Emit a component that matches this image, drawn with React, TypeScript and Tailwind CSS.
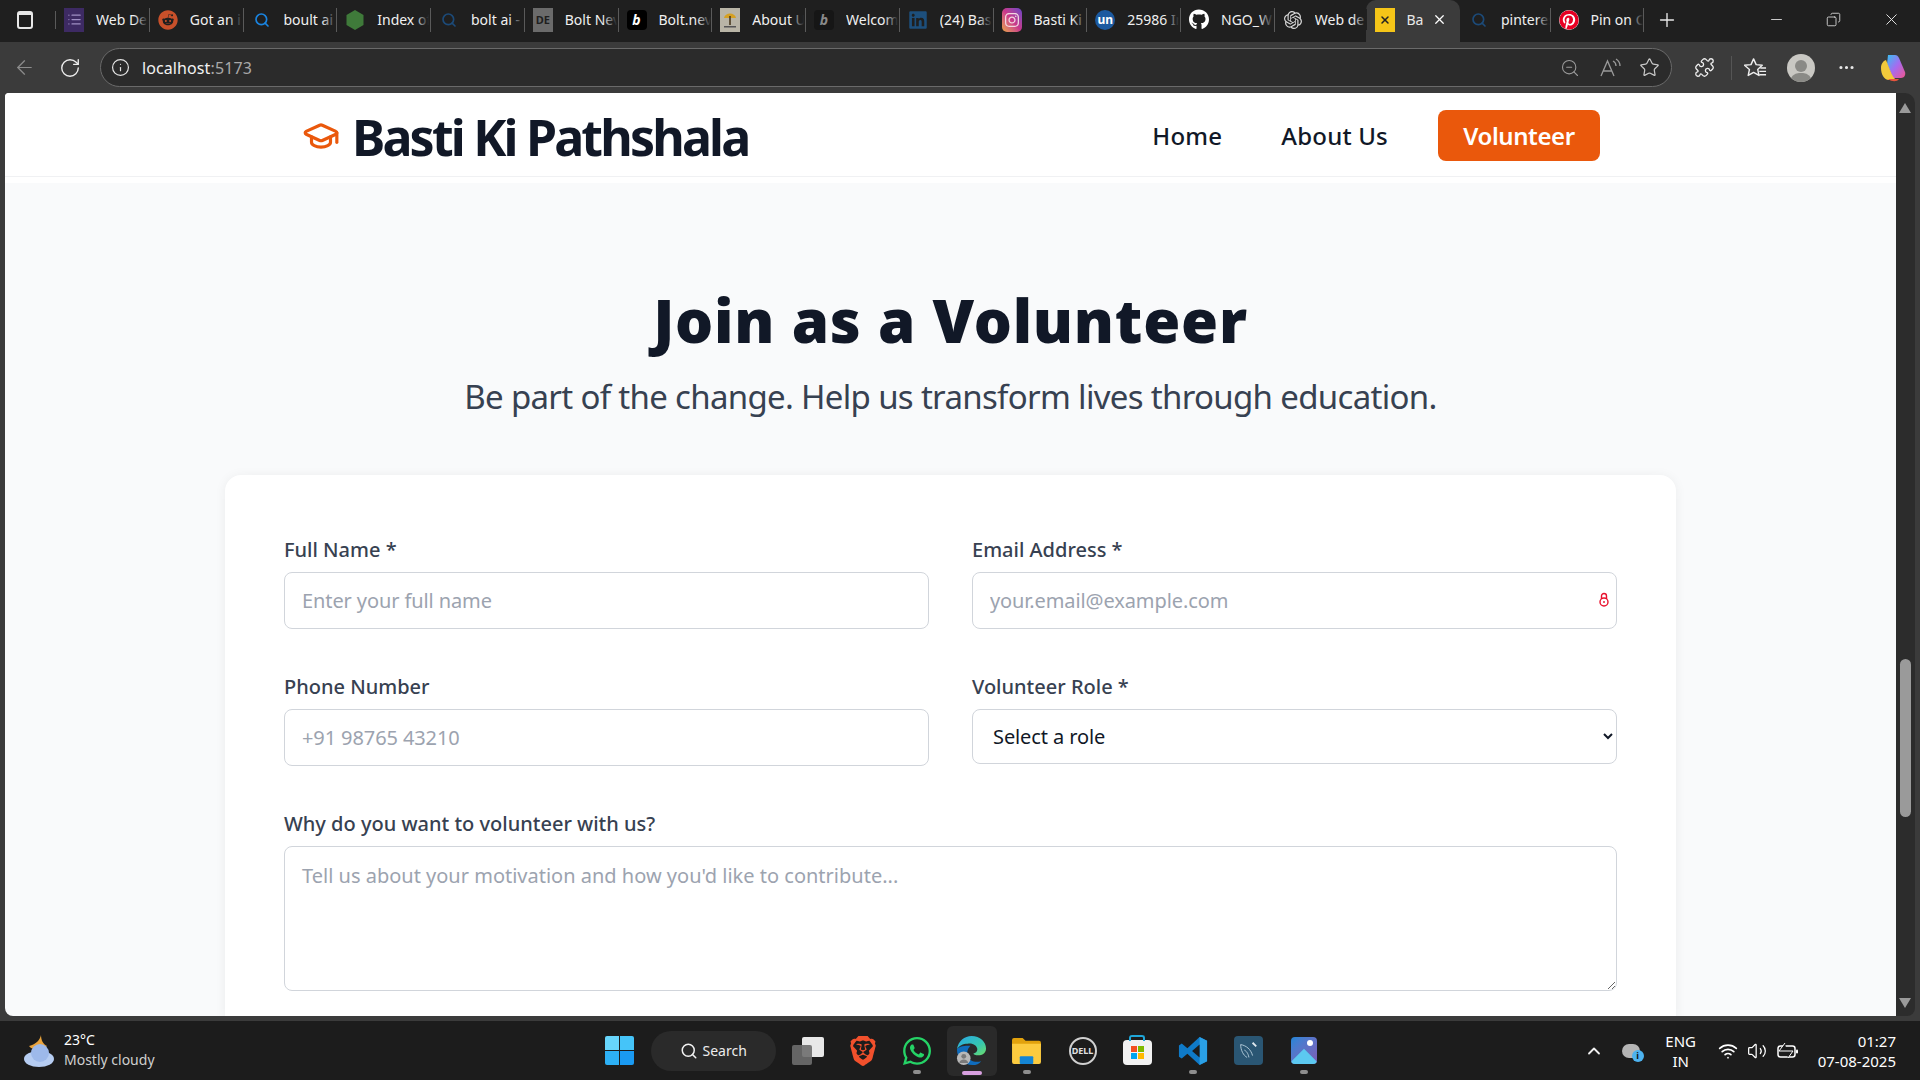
import React from "react";
import {
  ArrowLeft,
  RotateCw,
  Info,
  ZoomOut,
  Star,
  Puzzle,
  MoreHorizontal,
  Plus,
  Minus,
  X,
  Search,
  ChevronUp,
  Wifi,
  Volume2,
  GraduationCap,
  List,
  Copy,
} from "lucide-react";
import { FaWhatsapp, FaGithub, FaPinterest, FaLinkedin, FaReddit, FaInstagram } from "react-icons/fa";
import { SiBrave, SiOpenai } from "react-icons/si";

const font = "font-['Noto_Sans','Open_Sans',sans-serif]";

interface TabItem {
  id: string;
  title: string;
  icon: React.ReactNode;
}

const SearchFav = ({ dim }: { dim?: boolean }) => (
  <Search size={16} strokeWidth={2.5} className={dim ? "text-[#1c4a78]" : "text-[#1a84e0]"} />
);

const BoltFav = ({ dark }: { dark?: boolean }) => (
  <span
    className={`flex h-5 w-5 items-center justify-center rounded-[4px] text-[14px] font-bold italic ${
      dark ? "bg-[#161616] text-[#8a8a8a]" : "bg-black text-white"
    }`}
  >
    b
  </span>
);

const tabsLeft: TabItem[] = [
  {
    id: "trello",
    title: "Web De",
    icon: (
      <span className="flex h-6 w-5 items-center justify-center bg-[#3d2a63]">
        <List size={15} className="text-[#9f8fc4]" />
      </span>
    ),
  },
  { id: "reddit", title: "Got an i", icon: <FaReddit size={20} className="text-[#c8502a]" /> },
  { id: "s1", title: "boult ai", icon: <SearchFav /> },
  {
    id: "node",
    title: "Index of",
    icon: (
      <svg viewBox="0 0 20 22" className="h-6 w-5">
        <path d="M10 1l8.500 5v10L10 21l-8.500-5V6z" fill="#3f7a3a" />
      </svg>
    ),
  },
  { id: "s2", title: "bolt ai -", icon: <SearchFav dim /> },
  {
    id: "de",
    title: "Bolt Nev",
    icon: (
      <span className="flex h-6 w-5 items-center justify-center bg-[#6b6b6b] text-[11px] font-bold leading-none text-[#1f1f1f]">
        DE
      </span>
    ),
  },
  { id: "bolt", title: "Bolt.nev", icon: <BoltFav /> },
  {
    id: "about",
    title: "About U",
    icon: (
      <span className="flex h-6 w-5 items-center justify-center bg-[#b9b5a6]">
        <svg viewBox="0 0 20 24" className="h-6 w-5">
          <path d="M4 10c1-6 11-6 12 0z" fill="#d5a021" />
          <rect x="9.200" y="8" width="1.600" height="9" fill="#4a3a20" />
          <rect x="4" y="18" width="12" height="1.500" fill="#555" />
        </svg>
      </span>
    ),
  },
  { id: "bolt2", title: "Welcom", icon: <BoltFav dark /> },
  { id: "in", title: "(24) Bas", icon: <FaLinkedin size={20} className="text-[#1d4f7c]" /> },
  {
    id: "ig",
    title: "Basti Ki",
    icon: (
      <span className="flex h-6 w-5 items-center justify-center rounded-[5px] bg-gradient-to-tr from-[#e8a23a] via-[#c9368a] to-[#6a3fc8]">
        <FaInstagram size={16} className="text-[#f3d6e0]" />
      </span>
    ),
  },
  {
    id: "un",
    title: "25986 In",
    icon: (
      <span className="flex h-5 w-5 items-center justify-center rounded-full bg-[#1c5aa0] text-[12px] font-bold text-white">
        un
      </span>
    ),
  },
  { id: "gh", title: "NGO_W", icon: <FaGithub size={21} className="text-white" /> },
  { id: "gpt", title: "Web de", icon: <SiOpenai size={18} className="text-[#d8d8d8]" /> },
];

const TabCell = ({ tab }: { tab: TabItem }) => (
  <div className="flex h-[24px] w-[93.75px] shrink-0 items-center border-r border-[#5a5a5a] pl-[8px]">
    <span className="flex w-[20px] shrink-0 items-center justify-center">{tab.icon}</span>
    <span className="relative ml-[12px] w-[52px] overflow-hidden whitespace-nowrap text-[14px] text-[#f0f0f0]">
      {tab.title}
      <span className="absolute inset-y-0 right-0 w-[14px] bg-gradient-to-r from-transparent to-[#1f1f1f]" />
    </span>
  </div>
);

const TabBar = () => (
  <div className="flex h-[42px] shrink-0 items-center bg-[#1f1f1f] pb-[3px]">
    <div className="flex w-[56px] shrink-0 items-center border-r border-[#5a5a5a]">
      <span className="ml-[17px] mr-[22px] h-[18px] w-[17px] rounded-[3px] border-2 border-[#e8e8e8] border-t-[4px]" />
    </div>
    {tabsLeft.map((tab) => (
      <TabCell key={tab.id} tab={tab} />
    ))}
    <div className="-ml-[3px] -mb-[3px] flex h-[42px] w-[94px] shrink-0 items-center self-end rounded-t-[10px] bg-[#3b3b3b] pb-[3px] pl-[9px]">
      <span className="flex h-6 w-5 items-center justify-center bg-[#f5c518]">
        <X size={12} strokeWidth={3} className="text-[#222]" />
      </span>
      <span className="ml-[12px] w-[16px] overflow-hidden text-[14px] text-[#e8e8e8]">Ba</span>
      <X size={15} className="ml-[9px] text-white" />
    </div>
    <div className="flex h-[24px] w-[91px] shrink-0 items-center border-r border-[#5a5a5a] pl-[10px]">
      <span className="flex w-[20px] justify-center">
        <SearchFav dim />
      </span>
      <span className="relative ml-[12px] w-[50px] overflow-hidden whitespace-nowrap text-[14px] text-[#f0f0f0]">
        pinterest
        <span className="absolute inset-y-0 right-0 w-[14px] bg-gradient-to-r from-transparent to-[#1f1f1f]" />
      </span>
    </div>
    <TabCell tab={{ id: "pin", title: "Pin on C", icon: <FaPinterest size={20} className="rounded-full bg-white text-[#e60023]" /> }} />
    <Plus size={22} strokeWidth={1.5} className="ml-[12px] text-[#e8e8e8]" />
    <div className="ml-auto flex items-center text-[#e8e8e8]">
      <Minus size={17} strokeWidth={1.2} className="mr-[41px]" />
      <Copy size={15} strokeWidth={1.3} className="mr-[41px] -scale-x-100" />
      <X size={19} strokeWidth={1.2} className="mr-[19px]" />
    </div>
  </div>
);

const ToolBar = () => (
  <div className="flex h-[51px] shrink-0 items-center bg-[#3b3b3b]">
    <ArrowLeft size={23} strokeWidth={1.3} className="ml-[13px] text-[#8c8c8c]" />
    <RotateCw size={22} strokeWidth={1.5} className="ml-[23px] text-[#ececec]" />
    <div className="ml-[19px] flex h-[39px] w-[1572px] items-center rounded-full border border-[#6a6a6a] bg-[#2b2b2b]">
      <Info size={19} strokeWidth={1.5} className="ml-[10px] text-[#e4e4e4]" />
      <span className="ml-[12px] text-[16px] tracking-[0.1px] text-[#f2f2f2]">
        localhost<span className="text-[#a8a8a8]">:5173</span>
      </span>
      <div className="ml-auto flex items-center text-[#9a9a9a]">
        <ZoomOut size={20} strokeWidth={1.3} className="mr-[20px]" />
        <svg viewBox="0 0 22 20" className="mr-[17px] h-[20px] w-[22px]" fill="none" stroke="currentColor" strokeWidth="1.3">
          <path d="M1 18L7.500 3 14 18M3.500 13h8" />
          <path d="M13 3c2 1 3 3 3 5M16 1c2.500 1.500 4 4 4 7" />
        </svg>
        <Star size={21} strokeWidth={1.4} className="mr-[11px] text-[#c8c8c8]" />
      </div>
    </div>
    <Puzzle size={21} strokeWidth={1.5} className="ml-[22px] text-[#eee]" />
    <span className="ml-[16px] h-[24px] w-px bg-[#555]" />
    <svg viewBox="0 0 24 22" className="ml-[12px] h-[22px] w-[23px]" fill="none" stroke="#eee" strokeWidth="1.5" strokeLinejoin="round">
      <path d="M10 1.500l2.700 6 6.300.7-4.700 4.300 1.300 6.300-5.600-3.200-5.600 3.200 1.300-6.300L.5 8.200l6.800-.7z" />
      <path d="M17 11h6M16 14.500h7M16 18h7" />
    </svg>
    <span className="ml-[20px] flex h-[28px] w-[28px] flex-col items-center justify-end overflow-hidden rounded-full bg-[#c9c8c3]">
      <span className="mb-[1px] h-[12px] w-[12px] rounded-full bg-[#8a8a86]" />
      <span className="h-[9px] w-[22px] rounded-t-full bg-[#8a8a86]" />
    </span>
    <MoreHorizontal size={19} className="ml-[22px] text-[#e8e8e8]" />
    <svg viewBox="0 0 28 30" className="ml-[23px] h-[30px] w-[28px]">
      <defs>
        <linearGradient id="cp" x1="0" y1="0" x2="1" y2="1">
          <stop offset="0" stopColor="#35c1f1" />
          <stop offset="0.5" stopColor="#a56bf0" />
          <stop offset="1" stopColor="#f0558e" />
        </linearGradient>
      </defs>
      <path d="M9 2h7c2 0 3 1 4 3l6 14c1 3-1 6-4 6h-8L8 11z" fill="url(#cp)" />
      <path d="M7 7c-3 1-5 4-5 8 0 6 3 12 8 12h8c-3-1-5-5-7-10z" fill="#f2c93b" />
      <path d="M9 26h11c-2 3-7 3-11 0z" fill="#e6553d" />
    </svg>
  </div>
);

const labelClass = "block h-[27px] text-[20px] font-medium leading-[27px] text-[#374151]";

const Field = ({ label, placeholder, trailing }: { label: string; placeholder: string; trailing?: React.ReactNode }) => (
  <div>
    <label className={labelClass}>{label}</label>
    <div className="relative mt-[9px]">
      <input
        placeholder={placeholder}
        className="block h-[57px] w-full rounded-[8px] border border-[#d1d5db] bg-white px-[17px] text-[20px] tracking-[-0.1px] outline-none placeholder:text-[#9ca3af]"
      />
      {trailing}
    </div>
  </div>
);

const LockBadge = () => (
  <svg viewBox="0 0 10 16" className="absolute right-[8px] top-[20px] h-[16px] w-[10px]" fill="none" stroke="#e8112d" strokeWidth="1.4">
    <path d="M2.500 7V4a2.500 2.500 0 015 0v3" />
    <circle cx="5" cy="10" r="4" />
    <path d="M5 9v2" />
  </svg>
);

const Page = () => (
  <div className="flex min-h-0 flex-1 overflow-hidden bg-[#3b3b3b] pl-[5px] pr-[5px]">
    <div className={`min-w-0 flex-1 overflow-hidden rounded-bl-[8px] rounded-tl-[4px] bg-[#f9fafb] ${font}`}>
      <nav className="bg-white pb-[6px]">
        <div className="flex h-[84px] items-center border-b border-[#f0f1f3] pl-[297px] pr-[296px] pt-[2px]">
          <GraduationCap size={38} strokeWidth={2} className="text-[#ea580c]" />
          <span className="ml-[12px] mt-[2px] text-[50px] font-bold leading-none tracking-[-2.8px] text-[#111827]">Basti Ki Pathshala</span>
          <div className="ml-auto flex items-center text-[24px] font-medium tracking-[0.2px] text-[#111827]">
            <span>Home</span>
            <span className="ml-[59px]">About Us</span>
            <span className="ml-[50px] flex h-[51px] w-[162px] items-center justify-center rounded-[8px] bg-[#ea580c] font-semibold tracking-[-0.4px] text-white">
              Volunteer
            </span>
          </div>
        </div>
      </nav>

      <main className="flex flex-col items-center pt-[97px]">
        <h1 className="text-[60px] font-black leading-[80px] tracking-[0.77px] text-[#111827]">Join as a Volunteer</h1>
        <p className="mt-[17px] text-[33px] leading-[40px] tracking-[-0.68px] text-[#374151]">
          Be part of the change. Help us transform lives through education.
        </p>

        <form className="mt-[58px] w-[1451px] rounded-[16px] bg-white px-[59px] pb-[40px] pt-[61px] shadow-[0_1px_12px_rgba(0,0,0,0.06)]">
          <div className="grid grid-cols-2 gap-x-[43px] gap-y-[44px]">
            <Field label="Full Name *" placeholder="Enter your full name" />
            <Field label="Email Address *" placeholder="your.email@example.com" trailing={<LockBadge />} />
            <Field label="Phone Number" placeholder="+91 98765 43210" />
            <div>
              <label className={labelClass}>Volunteer Role *</label>
              <select className="mt-[9px] block h-[55px] w-full rounded-[8px] border border-[#d1d5db] bg-white pl-[16px] pr-[2px] text-[20px] tracking-[-0.1px] text-[#111827] outline-none">
                <option>Select a role</option>
              </select>
            </div>
          </div>
          <label className={`mt-[44px] ${labelClass}`}>Why do you want to volunteer with us?</label>
          <textarea
            placeholder="Tell us about your motivation and how you'd like to contribute..."
            className="mt-[9px] block h-[145px] w-full rounded-[8px] border border-[#d1d5db] bg-white px-[17px] py-[14px] text-[20px] outline-none placeholder:text-[#9ca3af]"
          />
        </form>
      </main>
    </div>
    <div className="relative w-[19px] shrink-0 rounded-br-[8px] rounded-tr-[10px] bg-[#2c2c2c]">
      <span className="absolute left-[3px] top-[10px] h-0 w-0 border-x-[6px] border-b-[10px] border-x-transparent border-b-[#9a9a9a]" />
      <span className="absolute left-[4px] top-[566px] h-[158px] w-[11px] rounded-full bg-[#9a9a9a]" />
      <span className="absolute bottom-[8px] left-[3px] h-0 w-0 border-x-[6px] border-t-[10px] border-x-transparent border-t-[#9a9a9a]" />
    </div>
  </div>
);

const TaskCell = ({ width, running, children }: { width: string; running?: boolean; children: React.ReactNode }) => (
  <div className={`relative flex h-[59px] items-center justify-center ${width}`}>
    {children}
    {running && <span className="absolute bottom-[6px] h-[4px] w-[8px] rounded-full bg-[#8e8e8e]" />}
  </div>
);

const Taskbar = () => (
  <div className="flex h-[64px] shrink-0 flex-col bg-[#3b3b3b]">
    <div className="h-[5px]" />
    <div className="relative flex flex-1 items-center bg-[#1c1c1c] font-['Noto_Sans',sans-serif] text-white">
      <svg viewBox="0 0 34 34" className="ml-[22px] h-[34px] w-[34px]">
        <path d="M19 1c-1 5-5 9-12 11 4 5 13 5 18 0-4-2-6-6-6-11z" fill="#e9a33b" />
        <ellipse cx="17" cy="25" rx="15" ry="8" fill="#b6cdf2" />
        <circle cx="18" cy="19" r="9" fill="#9db9ea" />
      </svg>
      <div className="ml-[8px] -mt-[2px] flex flex-col text-[14px] leading-[20px]">
        <span>23°C</span>
        <span className="text-[#cfcfcf]">Mostly cloudy</span>
      </div>

      <div className="ml-[450px] grid h-[29px] w-[29px] grid-cols-2 gap-[1px]">
        <span className="rounded-tl-[2px] bg-[#67d5fb]" />
        <span className="rounded-tr-[2px] bg-[#45c4f9]" />
        <span className="rounded-bl-[2px] bg-[#2db0f5]" />
        <span className="rounded-br-[2px] bg-[#1a9af2]" />
      </div>
      <div className="ml-[17px] flex h-[40px] w-[125px] items-center rounded-full bg-[#2a2a2a] pl-[29px]">
        <Search size={18} strokeWidth={2} className="text-[#f2f2f2]" />
        <span className="ml-[5px] text-[14px] text-[#ececec]">Search</span>
      </div>

      <div className="relative ml-[16px] h-[28px] w-[32px]">
        <span className="absolute right-0 top-0 h-[20px] w-[22px] rounded-[2px] bg-[#e8e8e8]" />
        <span className="absolute bottom-0 left-0 h-[20px] w-[20px] rounded-[2px] bg-[#6e6e6e]/90" />
      </div>

      <TaskCell width="ml-[12px] w-[54px]">
        <SiBrave size={30} className="text-[#f1502c]" />
      </TaskCell>
      <TaskCell width="w-[55px]" running>
        <FaWhatsapp size={32} className="text-[#25d366]" />
      </TaskCell>
      <div className="relative ml-[2px] flex h-[50px] w-[50px] items-center justify-center rounded-[6px] bg-[#2a2a2a]">
        <svg viewBox="0 0 32 32" className="h-[31px] w-[31px]">
          <defs>
            <linearGradient id="edge" x1="0" y1="0" x2="1" y2="1">
              <stop offset="0" stopColor="#2aa8e8" />
              <stop offset="0.6" stopColor="#35c7b0" />
              <stop offset="1" stopColor="#6fdc6a" />
            </linearGradient>
          </defs>
          <path d="M1 15C2 6 9 1 16 1c9 0 15 6 15 13 0 5-4 7-8 7-3 0-5-1-5-2 2 0 4-2 4-4 0-4-5-7-10-6-5 0-9 2-11 6z" fill="url(#edge)" />
          <path d="M1 15c0 9 7 16 16 16 4 0 7-1 9-4-6 2-13 0-14-7-1-4 1-7 3-9-6 0-12 0-14 4z" fill="#0f6cbd" />
          <circle cx="8" cy="24" r="7" fill="#b8b8b8" />
          <circle cx="8" cy="22" r="2.500" fill="#7a7a7a" />
          <path d="M3.500 29c0-5 9-5 9 0z" fill="#7a7a7a" />
        </svg>
        <span className="absolute bottom-[1px] h-[4px] w-[20px] rounded-full bg-[#d8a0e0]" />
      </div>
      <TaskCell width="w-[60px]" running>
        <svg viewBox="0 0 32 28" className="h-[27px] w-[31px]">
          <path d="M1 3a2 2 0 012-2h9l3 3h14a2 2 0 012 2v4H1z" fill="#e2a20d" />
          <path d="M1 7h30v19a2 2 0 01-2 2H3a2 2 0 01-2-2z" fill="#fccb3f" />
          <rect x="9" y="20" width="14" height="8" rx="1" fill="#1485d4" />
        </svg>
      </TaskCell>
      <TaskCell width="w-[52px]">
        <span className="flex h-[28px] w-[28px] items-center justify-center rounded-full border-2 border-[#d0d0d0] text-[9px] font-bold text-[#e0e0e0]">
          DELL
        </span>
      </TaskCell>
      <TaskCell width="w-[57px]">
        <span className="relative mt-[4px] flex h-[25px] w-[29px] items-center justify-center rounded-[4px] bg-[#f2f2f2]">
          <span className="absolute -top-[5px] h-[6px] w-[16px] rounded-t-[3px] border-2 border-b-0 border-[#1fa6d8]" />
          <span className="grid h-[13px] w-[13px] grid-cols-2 gap-px">
            <span className="bg-[#f25022]" />
            <span className="bg-[#7fba00]" />
            <span className="bg-[#00a4ef]" />
            <span className="bg-[#ffb900]" />
          </span>
        </span>
      </TaskCell>
      <TaskCell width="w-[54px]" running>
        <svg viewBox="0 0 32 32" className="h-[30px] w-[30px]">
          <path d="M23 1l8 4v22l-8 4-13-12-6 5-3-2V10l3-2 6 5z" fill="#0f7ac8" />
          <path d="M23 1l8 4v22l-8 4z" fill="#2aa0e6" />
          <path d="M23 9l-8 7 8 7z" fill="#1c1c1c" />
        </svg>
      </TaskCell>
      <TaskCell width="w-[57px]">
        <span className="flex h-[29px] w-[29px] items-center justify-center rounded-[4px] bg-[#2a5673]">
          <svg viewBox="0 0 24 24" className="h-[22px] w-[22px]" fill="none" stroke="#b7cfdd" strokeWidth="1">
            <path d="M4 5c6 1 11 5 13 12M4 5c0 6 3 12 7 14M8 11c2 1 4 3 5 8" />
            <path d="M17 3l4 4" strokeWidth="2" stroke="#dfe8ee" />
          </svg>
        </span>
      </TaskCell>
      <TaskCell width="w-[54px]" running>
        <span className="relative h-[27px] w-[26px] overflow-hidden rounded-[4px] bg-gradient-to-br from-[#1a86d8] to-[#7b5bb5]">
          <span className="absolute right-[4px] top-[3px] h-[6px] w-[6px] rounded-full bg-white" />
          <span className="absolute -bottom-[9px] left-[3px] h-[20px] w-[20px] rotate-45 bg-[#5cc8f0]" />
        </span>
      </TaskCell>

      <div className="ml-auto flex items-center">
        <ChevronUp size={20} strokeWidth={2.2} className="text-[#f0f0f0]" />
        <span className="relative ml-[18px] h-[14px] w-[18px] rounded-full bg-[#b5b5b5]">
          <span className="absolute -bottom-[4px] -right-[4px] flex h-[12px] w-[12px] items-center justify-center rounded-full bg-[#4db3f0] text-[9px] font-bold leading-none text-[#111]">
            i
          </span>
        </span>
        <div className="ml-[26px] flex w-[30px] flex-col items-center text-[15px] leading-[20px]">
          <span>ENG</span>
          <span>IN</span>
        </div>
        <Wifi size={20} strokeWidth={2} className="ml-[22px]" />
        <Volume2 size={20} strokeWidth={1.5} className="ml-[9px]" />
        <svg viewBox="0 0 22 16" className="ml-[10px] h-[16px] w-[22px]" fill="none" stroke="#fff" strokeWidth="1.5">
          <rect x="1" y="3" width="17" height="11" rx="2.500" />
          <rect x="19" y="6.500" width="2" height="4" rx="1" fill="#fff" stroke="none" />
          <path d="M8 0L2 8h14l-5 7" fill="#1c1c1c" strokeWidth="1" />
        </svg>
        <div className="ml-[19px] mr-[24px] flex flex-col items-end text-[15px] leading-[20px]">
          <span>01:27</span>
          <span>07-08-2025</span>
        </div>
      </div>
    </div>
  </div>
);

const App: React.FC = () => {
  return (
    <div className={`flex h-screen w-full flex-col overflow-hidden bg-[#1f1f1f] ${font}`}>
      <TabBar />
      <ToolBar />
      <Page />
      <Taskbar />
    </div>
  );
};

export default App;
